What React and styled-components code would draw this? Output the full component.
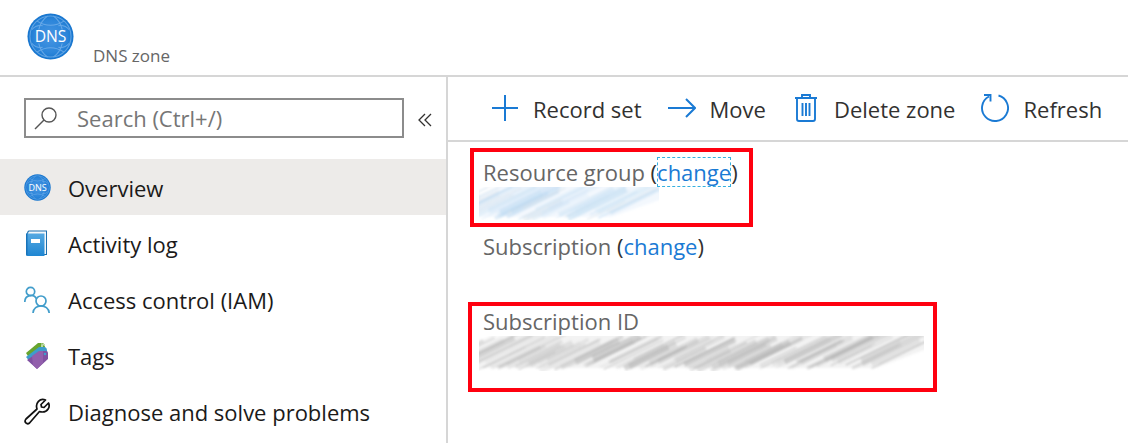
import React from "react";
import styled, { createGlobalStyle } from "styled-components";

const GlobalStyle = createGlobalStyle`
  *, *::before, *::after { box-sizing: border-box; }
  body {
    margin: 0;
    background: #fff;
    color: #1b1a19;
    font-family: "Open Sans", "Noto Sans", sans-serif;
    font-size: 22px;
    line-height: 28px;
  }
  button, input { font: inherit; color: inherit; }
`;

const Page = styled.div`
  display: flex;
  flex-direction: column;
  min-height: 100vh;
`;

const Header = styled.header`
  display: flex;
  align-items: flex-start;
  gap: 19px;
  padding: 13px 27px 7px;
  border-bottom: 2px solid #d6d6d6;
`;

const ResourceType = styled.h1`
  margin: 31px 0 0;
  color: #666;
  font-size: 17px;
  font-weight: 400;
  line-height: 24px;
`;

const Body = styled.div`
  display: flex;
  flex: 1;
`;

const Sidebar = styled.aside`
  flex: 0 0 448px;
  border-right: 2px solid #d6d6d6;
`;

const SearchRow = styled.div`
  display: flex;
  align-items: center;
  gap: 14px;
  padding: 21px 14px 21px 24px;
`;

const SearchBox = styled.label`
  display: flex;
  flex: 1;
  align-items: center;
  gap: 19px;
  height: 40px;
  padding-left: 8px;
  border: 2px solid #8c8c8c;
`;

const SearchInput = styled.input`
  flex: 1;
  min-width: 0;
  padding: 0;
  border: 0;
  outline: 0;
  background: none;
  &::placeholder { color: #767676; opacity: 1; }
`;

const CollapseButton = styled.button`
  display: flex;
  padding: 4px 0 0;
  border: 0;
  background: none;
`;

const MenuLink = styled.a`
  display: flex;
  align-items: center;
  gap: 17px;
  height: 56px;
  padding: 2px 24px 0;
  background: ${(p) => (p.$active ? "#edebe9" : "transparent")};
  color: #1b1a19;
  text-decoration: none;
  white-space: nowrap;
  svg { margin-bottom: 2px; }
`;

const Main = styled.main`
  flex: 1;
  min-width: 0;
`;

const Toolbar = styled.div`
  display: flex;
  gap: 26px;
  padding: 15px 20px 15px 43px;
  border-bottom: 2px solid #d6d6d6;
`;

const Command = styled.button`
  display: flex;
  align-items: center;
  gap: 14px;
  height: 33px;
  padding: 0;
  border: 0;
  background: none;
  color: #323130;
  white-space: nowrap;
  svg { margin-bottom: 1px; }
`;

const Essentials = styled.div`
  display: flex;
  flex-direction: column;
  align-items: flex-start;
  padding: 6px 20px 20px;
`;

const Highlight = styled.section`
  max-width: 100%;
  width: ${(p) => p.$width};
  margin-left: ${(p) => p.$offset || "0"};
  padding: ${(p) => p.$padding};
  border: 4px solid #ff000f;
`;

const Field = styled.div`
  padding: 5px 15px 41px;
`;

const Label = styled.div`
  margin-bottom: 1px;
  color: #666;
  white-space: nowrap;
`;

const Paren = styled.span`
  color: #323130;
`;

const ChangeLink = styled.a`
  color: #1a7ad4;
  text-decoration: none;
  outline: ${(p) => (p.$focused ? "1px dashed #35b0e0" : "none")};
  outline-offset: -1px;
`;

const Scribble = styled.svg`
  display: block;
  margin-left: -4px;
`;

function DnsIcon({ size, id }) {
  return (
    <svg width={size} height={size} viewBox="0 0 48 48" aria-hidden="true">
      <defs>
        <radialGradient id={id}>
          <stop offset="0" stopColor="#4795e2" />
          <stop offset="0.7" stopColor="#2d86da" />
          <stop offset="1" stopColor="#1675ce" />
        </radialGradient>
      </defs>
      <circle cx="24" cy="24" r="23.5" fill={`url(#${id})`} />
      <g fill="none" stroke="#7db6ed" strokeWidth="1.1" opacity="0.7">
        <circle cx="24" cy="24" r="21" />
        <path d="M10 8 Q24 17 38 8 M10 40 Q24 31 38 40 M21 3 Q14 8 12 17 M27 3 Q34 8 36 17 M21 45 Q14 40 12 31 M27 45 Q34 40 36 31" />
        <path d="M5 17 Q9 12 16 13 M43 17 Q39 12 32 13 M5 31 Q9 36 16 35 M43 31 Q39 36 32 35" />
      </g>
      <text x="24" y="30" textAnchor="middle" fontFamily="Open Sans, sans-serif" fontSize="16" fill="#fff">DNS</text>
    </svg>
  );
}

const SearchIcon = () => (
  <svg width="24" height="24" viewBox="0 0 24 24" fill="none" stroke="#555" strokeWidth="1.4" aria-hidden="true">
    <circle cx="15" cy="9" r="7" />
    <path d="M10 14 L1 23" />
  </svg>
);

const CollapseIcon = () => (
  <svg width="14" height="14" viewBox="0 0 14 14" fill="none" stroke="#323130" strokeWidth="1.3" aria-hidden="true">
    <path d="M7 1 L1 7 L7 13 M13 1 L7 7 L13 13" />
  </svg>
);

const LogIcon = () => (
  <svg width="27" height="27" viewBox="0 0 27 27" aria-hidden="true">
    <defs>
      <linearGradient id="book" x1="0" y1="0" x2="0" y2="1">
        <stop offset="0" stopColor="#55a9e2" />
        <stop offset="1" stopColor="#1f86d2" />
      </linearGradient>
    </defs>
    <path d="M5 0.500 H23 V25 H20 V4 H3 Q3 0.500 5 0.500 Z" fill="#1b6fae" />
    <path d="M5 1.500 H22 V24 H20 V4 H4 Q4 2 5 1.500 Z" fill="#f4f8fb" />
    <path d="M2 3.500 H20.500 V26 H4 Q2 26 2 24 Z" fill="url(#book)" />
    <path d="M2 3.500 H3.500 V26 Q2 26 2 24 Z" fill="#1873b9" />
    <rect x="7" y="9" width="9" height="4" fill="#fff" />
  </svg>
);

const AccessIcon = () => (
  <svg width="27" height="27" viewBox="0 0 27 27" fill="none" stroke="#429dcb" strokeWidth="1.7" aria-hidden="true">
    <circle cx="6.500" cy="5.500" r="4.200" />
    <path d="M0.800 16 C0.800 8.500 10 7.500 12.500 13" />
    <circle cx="17" cy="15" r="5" />
    <path d="M9 27 C9.500 17.500 24.500 17.500 25.200 27" />
  </svg>
);

const TagsIcon = () => (
  <svg width="27" height="27" viewBox="0 0 27 27" aria-hidden="true">
    <path d="M2 11 L14 1 L19 1 Q21 2 21 5 L20 10 L7 19 Z" fill="#68a52e" />
    <path d="M2 15 L15 5 L21 5 Q23 6 23 8 L23 13 L8 22 Z" fill="#3d9dcc" />
    <path d="M3 18 L16 9 L22 9 Q24 9 24 11 L24 17 L13 27 Z" fill="#8051a1" />
    <path d="M8 14 L15 9 L19 9 L19 21 L13 27 L9 23 Z" fill="#925fac" />
    <path d="M17 2 Q20 1.500 20.500 4" fill="none" stroke="#d8ead0" strokeWidth="1" />
    <circle cx="18" cy="4" r="1" fill="#d8ead0" />
    <circle cx="21" cy="12" r="1.300" fill="#3d9dcc" />
  </svg>
);

const WrenchIcon = () => (
  <svg width="27" height="27" viewBox="0 0 27 27" fill="none" stroke="#111" strokeWidth="1.7" strokeLinejoin="round" aria-hidden="true">
    <path d="M21.500 2 L17 6.500 L17.500 9 L20 9.500 L24.500 5 C26.500 9 23.500 14 18.500 14 Q16.500 14 15.500 13.500 L5.500 25 C3 27 -0.500 24 2 21 L13 11 C11 5 16 -0.500 21.500 2 Z" />
  </svg>
);

const PlusIcon = () => (
  <svg width="28" height="28" viewBox="0 0 28 28" stroke="#1a7ad4" strokeWidth="2" aria-hidden="true">
    <path d="M14 1 V27 M1 14 H27" />
  </svg>
);

const MoveIcon = () => (
  <svg width="28" height="28" viewBox="0 0 28 28" fill="none" stroke="#1a7ad4" strokeWidth="2" aria-hidden="true">
    <path d="M0 14 H27 M18 5 L27 14 L18 23" />
  </svg>
);

const DeleteIcon = () => (
  <svg width="28" height="28" viewBox="0 0 28 28" fill="none" stroke="#1a7ad4" strokeWidth="1.9" aria-hidden="true">
    <path d="M3 4 H25 M10 4 V1 H18 V4 M5 4 V25 Q5 27 7 27 H21 Q23 27 23 25 V4" />
    <path d="M10.500 9 V22 M14 9 V22 M17.500 9 V22" />
  </svg>
);

const RefreshIcon = () => (
  <svg width="28" height="28" viewBox="0 0 28 28" fill="none" stroke="#1a7ad4" strokeWidth="1.9" aria-hidden="true">
    <path d="M17.500 1.500 A13 13 0 1 1 8 2.500 M3 1 H9.500 V7.500" />
  </svg>
);

/* Pencil-like strokes that cover a hidden value. */
function Redaction({ width, height, colors, id, strength, seed }) {
  let state = seed;
  const next = () => {
    state = (state * 16807) % 2147483647;
    return state / 2147483647;
  };
  const strokes = [];
  for (let x = -50; x < width - 50; x += 4) {
    const start = x + next() * 8;
    const low = height - next() * 12;
    const run = 36 + next() * 34;
    const thin = next() > 0.55;
    strokes.push({
      d: `M${start} ${low} l${run} ${-run * 0.49}`,
      w: thin ? 1.2 : 3 + next() * 4,
      c: colors[Math.floor(next() * colors.length)],
      o: strength * (thin ? 0.45 + next() * 0.5 : 0.25 + next() * 0.3),
    });
  }
  return (
    <Scribble width={width} height={height} viewBox={`0 0 ${width} ${height}`} role="img" aria-label="Hidden value">
      <defs>
        <filter id={id} filterUnits="userSpaceOnUse" x="-60" y="-20" width={width + 120} height={height + 40}>
          <feGaussianBlur stdDeviation="1.3 0.8" />
        </filter>
      </defs>
      <g filter={`url(#${id})`} fill="none">
        <path
          d={`M-9 ${height * 0.35} L30 -4 H${width + 9} V${height * 0.3} L${width - 48} ${height - 3} H-9 Z`}
          fill={colors[0]}
          opacity={strength * 0.25}
        />
        {strokes.map((s, i) => (
          <path key={i} d={s.d} stroke={s.c} strokeWidth={s.w} opacity={s.o} />
        ))}
      </g>
    </Scribble>
  );
}

const menu = [
  { text: "Overview", icon: <DnsIcon size={27} id="dns-small" />, active: true },
  { text: "Activity log", icon: <LogIcon /> },
  { text: "Access control (IAM)", icon: <AccessIcon /> },
  { text: "Tags", icon: <TagsIcon /> },
  { text: "Diagnose and solve problems", icon: <WrenchIcon /> },
];

const commands = [
  { text: "Record set", icon: <PlusIcon /> },
  { text: "Move", icon: <MoveIcon /> },
  { text: "Delete zone", icon: <DeleteIcon /> },
  { text: "Refresh", icon: <RefreshIcon /> },
];

function Changeable({ name, focused }) {
  return (
    <Label>
      {name} <Paren>(</Paren>
      <ChangeLink href="#change" $focused={focused}>change</ChangeLink>
      <Paren>)</Paren>
    </Label>
  );
}

export default function App() {
  return (
    <Page>
      <GlobalStyle />
      <Header>
        <DnsIcon size={47} id="dns-large" />
        <ResourceType>DNS zone</ResourceType>
      </Header>
      <Body>
        <Sidebar>
          <SearchRow>
            <SearchBox>
              <SearchIcon />
              <SearchInput type="text" placeholder="Search (Ctrl+/)" aria-label="Search" />
            </SearchBox>
            <CollapseButton type="button" aria-label="Collapse menu">
              <CollapseIcon />
            </CollapseButton>
          </SearchRow>
          <nav>
            {menu.map((m) => (
              <MenuLink key={m.text} href="#menu" $active={m.active}>
                {m.icon}
                {m.text}
              </MenuLink>
            ))}
          </nav>
        </Sidebar>
        <Main>
          <Toolbar>
            {commands.map((c) => (
              <Command key={c.text} type="button">
                {c.icon}
                {c.text}
              </Command>
            ))}
          </Toolbar>
          <Essentials>
            <Highlight $width="283px" $offset="2px" $padding="6px 9px 3px">
              <Changeable name="Resource group" focused />
              <Redaction width={180} height={33} colors={["#c5dff5", "#b5d5f0", "#d9e2ea", "#cfe4f7"]} id="soft-blue" strength={0.85} seed={71} />
            </Highlight>
            <Field>
              <Changeable name="Subscription" />
            </Field>
            <Highlight $width="469px" $padding="1px 11px 17px">
              <Label>Subscription ID</Label>
              <Redaction width={445} height={35} colors={["#bdbdbd", "#b0b0b0", "#cccccc", "#a0a0a0"]} id="soft-gray" strength={0.7} seed={913} />
            </Highlight>
          </Essentials>
        </Main>
      </Body>
    </Page>
  );
}
